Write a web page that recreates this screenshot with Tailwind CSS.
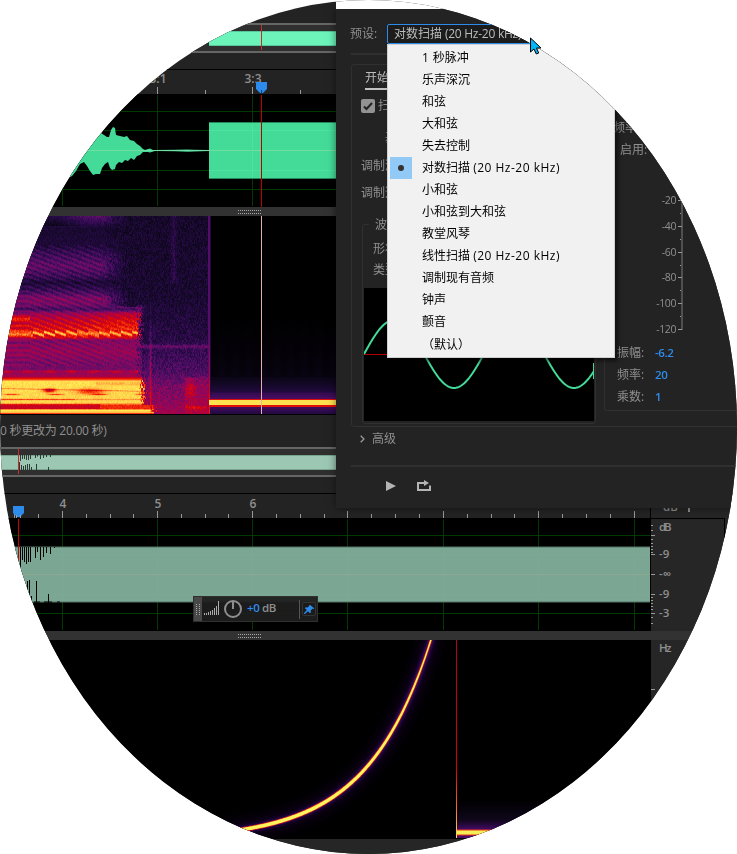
<!DOCTYPE html>
<html lang="zh-CN">
<head>
<meta charset="utf-8">
<title>音频编辑器</title>
<script src="https://cdn.jsdelivr.net/npm/@tailwindcss/browser@4"></script>
</head>
<body class="bg-white">
<div class="relative h-[854px] w-[737px] overflow-hidden font-['Open_Sans','Noto_Sans_CJK_SC',sans-serif] text-[12px] text-[#8f8f8f]">
<main class="relative h-[854px] w-[737px] overflow-hidden bg-[#232323] [clip-path:ellipse(368.5px_427px_at_368.5px_427px)]">

  <!-- upper editor -->
  <section class="flex h-[415px] w-[336px] flex-col">
    <div class="h-[23px]"></div>
    <div class="relative flex h-[30px] flex-col justify-center border-y-2 border-[#666] bg-[#2f2f2f]">
      <div class="ml-[209px] h-[15px] border-y border-[#55c79a] bg-[#6cf4bb]"></div>
      <div class="absolute top-0 left-[261px] h-[25px] w-px bg-[#d02828]"></div>
    </div>
    <div class="h-[17px] border-b border-black"></div>
    <svg class="block h-6 w-[336px]" viewBox="0 70 336 24">
      <g fill="#8f8f8f" font-family="Open Sans, sans-serif" font-size="12" font-weight="600" text-anchor="middle"><text x="158" y="83">3:1</text><text x="253" y="83">3:3</text></g>
      <path d="M157.500 87v7M252.500 87v7M205.500 90v4M300.500 90v4" stroke="#999"/>
      <path d="M256 82h11v7l-4 4h-3l-4-4z" fill="#2d8ceb"/><path d="M261.500 90v4" stroke="#163d66"/>
    </svg>
    <svg class="block h-[113px] w-[336px] bg-black" viewBox="0 94 336 113">
      <path d="M0 111.500H336M0 130.500H336M0 170.500H336M0 189.500H336M62.500 95V206M157.500 95V206M252.500 95V206" stroke="#003a00"/>
      <path fill="#44db99" d="M60 150 L72 145 80 142 88 139 95 136 101 133 104 135 107 137 109 137 111 130 113 127 115 128 116 135 120 136 124 137 127 136 130 140 134 141 137 144 140 146 143 149 145 150 148 149 150 148.500 153 150 155 150 175 149.700 187 149.500 194 149.700 209 150 209 151 194 151.400 188 151.700 175 151.300 155 151 150 152.500 148 152 143 152 140 155 137 156 134 160 131 158 128 161 125 160 122 163 119 162 116 165 115 169 112 170 110 168 108 162 105 164 102 168 100 174 96 174 93 175 90 171 87 166 84 162 80 164 76 171 72 176 60 182z"/>
      <rect x="209" y="122" width="127" height="57" fill="#27875d"/><rect x="209" y="123" width="127" height="55" fill="#44db99"/>
      <path d="M60 150.500H336" stroke="#8ce0a6" stroke-opacity=".65"/>
      <path d="M252.500 123V178M209 130.500H336M209 170.500H336" stroke="#4ce2a1"/>
      <path d="M261.500 95V207" stroke="#bd0000"/>
    </svg>
    <div class="flex h-[9px] bg-[#323232] pt-[3px] pl-[238px]">
      <svg class="block" width="24" height="4" viewBox="0 0 24 4"><path d="M0 .5h24M0 3.500h24" stroke="#aaa" stroke-dasharray="1 1"/></svg>
    </div>
    <div class="relative h-[199px] border-b border-black bg-black">
      <canvas id="spectrum" class="block" width="336" height="198"></canvas>
    </div>
  </section>

  <!-- lower editor -->
  <section class="flex w-[737px] flex-col">
    <div class="flex h-8 items-center"><span class="w-[106px] text-[12px] tracking-[-0.25px] whitespace-nowrap">0 秒更改为 20.00 秒)</span></div>
    <svg class="block h-[30px] w-[336px]" viewBox="0 447 336 30">
      <path fill="#2f2f2f" d="M0 447h336v30H0z"/><path fill="#666" d="M0 447h336v2H0zM0 475h336v2H0z"/>
      <path fill="#78a490" d="M0 455h336v15H0z"/><path fill="#9cc7b3" d="M0 456h336v13H0z"/>
      <path d="M20.500 455v6M22.500 455v4M24.500 455v4M26.500 455v5M28.500 455v5M30.500 455v4M35.500 455v3M37.500 455v1.500M40.500 455v4M43.500 455v3M46.500 455v2M50.500 455v2M19.500 462v8M21.500 465v5M23.500 466v4M25.500 465v5M27.500 464v6M29.500 464v6M31.500 467v3M36.500 464v6M48.500 467v3" stroke="#2b3b33"/>
      <path d="M18.500 449v25" stroke="#d02828"/>
    </svg>
    <div class="h-[17px] border-b border-black"></div>
    <div class="flex h-[137px]">
      <div class="w-[650px]">
        <svg class="block" width="650" height="137" viewBox="0 494 650 137">
          <g fill="#8f8f8f" font-family="Open Sans, sans-serif" font-size="12" font-weight="600" text-anchor="middle"><text x="63" y="508">4</text><text x="158" y="508">5</text><text x="253" y="508">6</text></g>
          <path d="M62.500 511v7M157.500 511v7M252.500 511v7M347.500 511v7M443.500 511v7M538.500 511v7M634.500 511v7M14.500 514v4M38.500 514v4M86.500 514v4M110.500 514v4M133.500 514v4M181.500 514v4M205.500 514v4M228.500 514v4M276.500 514v4M300.500 514v4M324.500 514v4M371.500 514v4M395.500 514v4M419.500 514v4M467.500 514v4M491.500 514v4M514.500 514v4M562.500 514v4M586.500 514v4M610.500 514v4" stroke="#999"/>
          <path d="M13 506h11v7l-4 4h-3l-4-4z" fill="#2d8ceb"/><path d="M16.500 515v3M20.500 515v3" stroke="#9aa0a6"/>
          <path d="M0 518h650v113H0z"/>
          <path d="M0 535.500H650M0 613.500H650M62.500 519V630M157.500 519V630M252.500 519V630M347.500 519V630M443.500 519V630M538.500 519V630M634.500 519V630" stroke="#003a00"/>
          <path fill="#527264" d="M0 546.500h650v56H0z"/><path fill="#7aa693" d="M0 547.500h650v54H0z"/>
          <path d="M62.500 548v53M157.500 548v53M252.500 548v53M347.500 548v53M443.500 548v53M538.500 548v53M634.500 548v53M0 554.500H650M0 594.500H650" stroke="#7ca996"/>
          <path d="M0 574.500H650" stroke="#91a890"/>
          <path d="M20.500 547v20M22.500 547v13M24.500 547v15M26.500 547v17M28.500 547v15M30.500 547v15M35.500 547v11M37.500 547v5M40.500 547v13M43.500 547v10M46.500 547v6M50.500 547v7M54.500 547v1M27.500 581v22M29.500 580v23M31.500 596v7M36.500 581v22M48.500 594v9M34 602h6M44 602h8M57 602h3"  stroke="#000"/>
          <path d="M18.500 519v112" stroke="#d00000"/>
        </svg>
      </div>
      <svg class="block" width="87" height="137" viewBox="650 494 87 137">
        <path fill="#262626" d="M651 494h86v137h-86z"/>
        <path d="M650.500 494v137M650 518.500h75M724.500 518v20" stroke="#000"/>
        <g fill="#8f8f8f" font-family="Open Sans, sans-serif" font-size="11.500" font-weight="600"><text x="663" y="511">dB</text><path d="M688 508h2v4h-2z"/><text x="659" y="531" textLength="12.500">dB</text><text x="659" y="558">-9</text><text x="659" y="578">-∞</text><text x="659" y="598">-9</text><text x="659" y="617">-3</text></g>
        <path d="M651 535.500h4M651 554.500h4M651 574.500h4M651 594.500h4M651 613.500h4M651 525.500h2M651 530.500h2M651 539.500h2M651 543.500h2M651 546.500h2M651 549.500h2M651 552.500h2M651 597.500h2M651 600.500h2M651 603.500h2M651 606.500h2M651 609.500h2M651 617.500h2M651 623.500h2" stroke="#999"/>
      </svg>
    </div>
    <div class="flex h-[9px] bg-[#323232] pt-[3px] pl-[238px]">
      <svg class="block" width="24" height="4" viewBox="0 0 24 4"><path d="M0 .5h24M0 3.500h24" stroke="#aaa" stroke-dasharray="1 1"/></svg>
    </div>
    <svg class="block h-[199px] w-[737px]" viewBox="0 640 737 199">
      <defs>
        <filter id="glow" x="-20%" y="-20%" width="140%" height="140%"><feGaussianBlur stdDeviation="8"/></filter>
        <filter id="halo"><feGaussianBlur stdDeviation="2"/></filter>
        <linearGradient id="edge" x1="0" y1="640" x2="0" y2="838" gradientUnits="userSpaceOnUse"><stop stop-color="#b5001c"/><stop offset=".65" stop-color="#d80000"/><stop offset=".85" stop-color="#ff6a20"/><stop offset="1" stop-color="#ffe45a"/></linearGradient>
        <linearGradient id="floor" x1="0" y1="0" x2="0" y2="1"><stop stop-color="#180b2b" stop-opacity="0"/><stop offset=".65" stop-color="#180b2b" stop-opacity=".6"/><stop offset="1" stop-color="#4a0b6e"/></linearGradient>
      </defs>
      <path d="M0 640h651v199H0z"/>
      <path fill="#262626" d="M651 640h86v199h-86z"/>
      <text x="659" y="652" textLength="12.500" fill="#8f8f8f" font-family="Open Sans, sans-serif" font-size="11.500" font-weight="600">Hz</text><path d="M651 689.500h4" stroke="#999"/>
      <g fill="none">
        <path class="sweep" stroke="#250845" stroke-width="12" filter="url(#glow)" opacity=".6"/>
        <path class="sweep" stroke="#3b0d6a" stroke-width="6" filter="url(#halo)"/>
      </g>
      <path id="rim" fill="#d8141c"/><path id="core" fill="#fff45c"/>
      <path fill="url(#floor)" d="M457 800h194v30H457z"/><path fill="#4a0b6e" d="M457 835h194v3H457z"/>
      <path fill="#f33010" d="M457 829.500h194v6H457z"/><path fill="#f2ef58" d="M457 830.500h194v4H457z"/>
      <path d="M456 640h1v198h-1z" fill="url(#edge)"/>
    </svg>
    <div class="h-[15px] bg-[#262626]"></div>
  </section>

  <!-- floating gain control -->
  <div class="absolute top-[596px] left-[193px] flex h-[26px] w-[125px] items-center border border-[#303030] bg-[#1e1e1e]/95">
    <div class="flex h-full w-[8px] items-center justify-center bg-[#484848]"><svg width="4" height="11" viewBox="0 0 4 11"><path d="M.5 0v11M3.500 0v11" stroke="#aaa" stroke-dasharray="1 1"/></svg></div>
    <svg class="mt-[-2px] ml-[2px]" width="15" height="14" viewBox="0 0 15 14"><path d="M.5 12v2M2.500 12v2M4.500 11v3M6.500 10v4M8.500 9v5M10.500 7v7M12.500 5v9M14.500 0v14" stroke="#aaa"/></svg>
    <svg class="ml-[4px]" width="20" height="20" viewBox="0 0 20 20" fill="none" stroke="#8e8e8e" stroke-width="2"><circle cx="10" cy="10" r="8"/><path d="M10 2v8"/></svg>
    <div class="ml-[4px] w-[52px] pb-[2px] text-[11.500px] leading-[22px] font-semibold tracking-[-0.4px]"><span class="text-[#2d8ceb]">+0</span> dB</div>
    <div class="h-[19px] w-px bg-[#555]"></div>
    <svg class="ml-[2px] rounded-[2px] border border-[#333] bg-[#1b1b1b]" width="14" height="14" viewBox="0 0 14 14"><path d="M8 2l5 4-1 1-1-.3-2 2 .2 2.300-1 1-2.500-2.500L2 13l-1-1 3.500-3.700L2.200 6l1-1 2.300.2 2-2L7 2.700z" fill="#2d8ceb"/></svg>
  </div>

  <!-- tone generator dialog, with the blank desktop strip above its title edge -->
  <section class="absolute top-[9px] left-[336px] h-[499px] w-[420px] bg-[#232323] shadow-[0_0_8px_rgba(0,0,0,0.5)]">
    <div class="absolute -top-[9px] left-0 h-[9px] w-full bg-white"></div>
    <header class="ml-[15px] flex h-[46px] border-b-2 border-[#303030] pt-[15px]">
      <label class="-ml-px w-[37px] leading-[19px]">预设:</label>
      <div class="h-[20px] w-[220px] rounded-[2px] border border-[#2d8ceb] bg-[#1c1c1c] pl-[6px] text-[12px] leading-[18px] tracking-[-0.25px] whitespace-nowrap text-[#bcbcbc]"><span class="tracking-normal">对数扫描</span> (20 Hz-20 kHz)</div>
    </header>
    <div class="mt-[9px] ml-[15px] flex h-[363px] rounded-[3px] border border-[#303030]">
      <div class="w-[252px] shrink-0">
        <div class="ml-[13px] flex h-[25px] w-8 items-end border-b-2 border-[#c0c0c0] leading-[21px] whitespace-nowrap text-[#bdbdbd]">开始</div>
        <div class="mt-[8px] ml-[9px] flex h-[15px] items-center gap-[3px] leading-[15px]"><svg width="14" height="14" viewBox="0 0 14 14"><rect width="14" height="14" rx="2" fill="#929292"/><path d="M3 7.500l2.500 2.500L11 4" fill="none" stroke="#232323" stroke-width="2"/></svg>扫描</div>
        <div class="mt-[15px] ml-[33px] leading-[20px]">基频:</div>
        <div class="mt-[8px] ml-[9px] leading-[20px]">调制深度:</div>
        <div class="mt-[7px] ml-[9px] leading-[20px]">调制速率:</div>
        <div class="mt-[21px] ml-[10px] h-[200px] w-[234px] rounded-[3px] border border-[#303030] leading-[20px]">
          <div class="-mt-[10px] ml-[6px] w-[34px] bg-[#232323] pl-[6px] whitespace-nowrap">波形</div>
          <div class="mt-[4px] ml-[10px]">形状:</div>
          <div class="mt-[1px] ml-[10px]">类型:</div>
          <svg class="mt-[8px] ml-px block bg-black" width="230" height="133" viewBox="0 0 230 133"><path d="M0 66.500h60" stroke="#b00000"/><path id="tone" fill="none" stroke="#44db99" stroke-width="2"/><path d="M229.500 75v16" stroke="#44db99"/></svg>
        </div>
      </div>
      <div class="w-[160px] shrink-0">
        <div class="mt-[53px] ml-[9px] leading-[20px]">频率分量</div>
        <div class="mt-[2px] ml-[16px] leading-[20px]">启用:</div>
        <svg class="mt-[32px] ml-[48px] block" width="48" height="146" viewBox="652 192 48 146">
          <g fill="#8f8f8f" font-family="Open Sans, sans-serif" font-size="10.500" text-anchor="end" font-weight="500" letter-spacing="-.4"><text x="676" y="204">-20</text><text x="676" y="230">-40</text><text x="676" y="256">-60</text><text x="676" y="281">-80</text><text x="676" y="307">-100</text><text x="676" y="333">-120</text></g>
          <path d="M682 200v130" stroke="#505050" stroke-width="2"/><path d="M678 200.500h4M678 226.500h4M678 252.500h4M678 277.500h4M678 303.500h4M678 329.500h4M680 213.500h1M680 239.500h1M680 265.500h1M680 290.500h1M680 316.500h1" stroke="#999"/>
        </svg>
        <div class="grid h-[73px] grid-cols-[38px_60px] grid-rows-[22px_22px_22px] rounded-bl-[3px] border-b border-l border-[#303030] pt-[5px] pl-[12px] leading-[20px]">
          <span>振幅:</span><b class="text-[11.500px] font-semibold tracking-[-0.4px] text-[#2d8ceb]">-6.2</b>
          <span>频率:</span><b class="text-[11.500px] font-semibold tracking-[-0.4px] text-[#2d8ceb]">20</b>
          <span>乘数:</span><b class="text-[11.500px] font-semibold text-[#2d8ceb]">1</b>
        </div>
      </div>
    </div>
    <div class="ml-[24px] flex h-[24px] items-center gap-[7px]"><svg width="5" height="8" viewBox="0 0 5 8"><path d="M.7.7L4 4 .7 7.300" fill="none" stroke="#999" stroke-width="1.300"/></svg><span>高级</span></div>
    <footer class="mt-[14px] ml-[15px] flex items-start gap-[21px] border-t-2 border-[#303030] pt-[13px] pl-[35px]">
      <svg class="mt-px" width="10" height="10" viewBox="0 0 10 10"><path d="M0 0l10 5-10 5z" fill="#b4b4b4"/></svg>
      <svg width="14" height="12" viewBox="0 0 14 12"><path d="M5 3H1v7h12V5.500" fill="none" stroke="#b4b4b4" stroke-width="2"/><path d="M5 2h2V0l5 3-5 3V4H5z" fill="#b4b4b4"/></svg>
    </footer>
  </section>

  <!-- preset menu -->
  <ul class="absolute top-[44px] left-[387px] h-[314px] w-[228px] border border-[#d0d0d0] bg-[#f1f1f1] py-[2px] text-[12px] leading-[22px] text-black shadow-[3px_3px_4px_rgba(0,0,0,0.5)] *:h-[22px] *:pl-[34px] *:whitespace-nowrap">
    <li><span class="tracking-[0.4px]">1 </span>秒脉冲</li><li>乐声深沉</li><li>和弦</li><li>大和弦</li><li>失去控制</li>
    <li class="relative">对数扫描 <span class="tracking-[0.5px]">(20 Hz-20 kHz)</span><i class="absolute top-0 left-[2px] flex h-[22px] w-[22px] items-center justify-center bg-[#91c9f7]"><svg width="6" height="6"><circle cx="3" cy="3" r="3" fill="#333"/></svg></i></li>
    <li>小和弦</li><li>小和弦到大和弦</li><li>教堂风琴</li><li>线性扫描 <span class="tracking-[0.5px]">(20 Hz-20 kHz)</span></li><li>调制现有音频</li><li>钟声</li><li>颤音</li><li class="pt-px">（默认）</li>
  </ul>
</main>
<svg class="absolute top-[37px] left-[530px]" width="12" height="18" viewBox="0 0 12 18"><path d="M.5 1v14l3.500-3 2.300 5 2.400-1-2.200-5H11z" fill="#00b7f5" stroke="#000"/></svg>
</div>

<script>
const clamp = v => Math.max(0, Math.min(1, v));
const ramp = [[0,0,0,0],[.14,18,8,36],[.25,40,10,72],[.36,84,14,104],[.47,140,8,96],[.57,180,0,60],[.67,222,8,4],[.78,255,80,20],[.88,255,175,65],[1,255,250,88]];
function colour(v) {
  v = clamp(v);
  let i = 1;
  while (i < ramp.length - 1 && ramp[i][0] < v) i++;
  const a = ramp[i - 1], b = ramp[i], t = (v - a[0]) / (b[0] - a[0]);
  return [1, 2, 3].map(k => a[k] + (b[k] - a[k]) * t);
}
let seed = 77;
const rnd = () => (seed = (seed * 16807) % 2147483647) / 2147483647;
const canvas = document.getElementById('spectrum'), ctx = canvas.getContext('2d');
const img = ctx.createImageData(336, 198);
const g = (y, c, w) => Math.exp(-(((y - c) / w) ** 2));
const sustained = [[0,.36],[6,.27],[12,.18],[28,.2],[36,.29],[50,.38],[60,.3],[66,.2],[74,.3],[82,.44],[88,.42],[93,.32],[97,.5],[104,.6],[112,.66],[121,.64],[124,.44],[136,.49],[145,.44],[153,.42],[160,.54],[163,.76],[165,.96],[186,.94],[189,.72],[192,.72],[194,.97],[196,.9],[198,.6]];
const tail = [[0,.16],[80,.18],[125,.24],[135,.28],[155,.34],[170,.43],[185,.47],[198,.52]];
const lookup = (t, y) => { for (let i = 1; i < t.length; i++) if (y <= t[i][0]) { const a = t[i-1], b = t[i]; return a[1] + (b[1]-a[1]) * (y-a[0]) / (b[0]-a[0]); } return t[t.length-1][1]; };
const noise = [];
for (let x = 0; x < 336; x++) { noise[x] = []; let n = 0; for (let y = 0; y < 198; y++) { if (y % 2 === 0 || rnd() < .25) n = rnd() - .5; noise[x][y] = n; } }
for (let y = 0; y < 198; y++) for (let x = 0; x < 336; x++) {
  let v;
  const n = noise[x][y];
  if (x < 209) {
    const drift = x < 28 ? 0 : (x - 28) * .38;
    const stripe = Math.sin((y - drift) * 1.28);
    let s = lookup(sustained, y);
    if (y < 10) s -= .12 * clamp((85 - x) / 30);
    if (y > 28 && y < 150) s += stripe * (y > 95 && y < 123 ? .06 : .05) * (x > 100 ? .5 : 1);
    if (y < 160) s += n * .09;
    if (y > 95 && y < 114) s += .06 * clamp((x - 80) / 40);
    if (x < 30) s += .2 * g(y, 102, 1.5);
    s += g(y, 117 + (x > 30 ? ((x % 11) - 5) * .3 : 0), 2) * .22;
    s += g(y, 155, 1.5) * (.12 + .06 * Math.sin(x / 3.5));
    if (y > 164 && y < 194) {
      s += n * .05;
      s -= g(y, 172 + x * .02, .7) * .11 + g(y, 183, .8) * .18 * (x < 75 ? 1 : .5) + g(y, 178, .8) * .2 * clamp(Math.sin(x / 7));
      s -= .35 * g(y, 174, 2) * g(x, 49, 6) + .22 * g(y, 175, 3) * g(x, 90, 14);
      s -= .14 * g(y, 167, 2) * (x > 95 ? 1 : 0) * (.5 + n);
    }
    if (x < 100 && y > 187 && y < 193) s -= .1;
    let t = lookup(tail, y) + n * .14 + .13 * g(y, 130, 2);
    if (y > 160) t += .14 * g(x, 190, 5) * g(y, 172, 10) + .12 * g(y, 191, 2) * g(x, 196, 12) + .05 * clamp((x - 184) * 9);
    if (y > 80) t += .2 * g(x, 150, 1) * clamp((y - 80) / 70);
    if (y < 68) t += .08 * g(x, 173, 3);
    const end = y > 188 ? 156 : y > 160 ? 146 : y > 90 ? 142 : 128;
    const soft = y < 90 ? 26 : 6, m = clamp((end + n * 5 - x) / soft);
    v = t + (s - t) * m;
    if (y > 88 && y < 100) v += .12 * g(x, 140, 4);
    if (x === 208) v = Math.max(v, .36);
  } else {
    v = y < 90 ? 0 : .1 * Math.pow((y - 90) / 85, 1.5) * (.8 + .15 * Math.cos(x / 2.2));
    if (y > 160) v = .08 + .2 * ((y - 160) / 23);
    if (y > 175) v = .24 + (y - 175) * .012 + (y % 2) * .025;
    if (y === 183 || y === 189 || y === 190) v = .68;
    if (y > 183 && y < 189) v = .96;
    if (y > 190) v = .32 - (y - 190) * .012;
    if (x < 211) v = Math.max(v, x === 209 ? .36 + .34 * clamp((y - 120) / 65) : .2);
  }
  const c = colour(v), p = (y * 336 + x) * 4;
  img.data[p] = c[0]; img.data[p+1] = c[1]; img.data[p+2] = c[2]; img.data[p+3] = 255;
}
ctx.putImageData(img, 0, 0);
ctx.fillStyle = '#e5afaa';
ctx.fillRect(261, 0, 1, 198);

// logarithmic sweep on a linear frequency axis
const curve = [];
for (let x = 215; x <= 432; x++) curve.push([x, 840 - Math.exp(5.308 - .0157 * (431.5 - x))]);
const line = p => 'M' + p.map(q => q[0].toFixed(2) + ' ' + q[1].toFixed(2)).join('L');
document.querySelectorAll('.sweep').forEach(e => e.setAttribute('d', line(curve)));
function ribbon(extra) {
  const up = [], down = [];
  curve.forEach((p, i) => {
    const a = curve[Math.max(0, i-1)], b = curve[Math.min(curve.length-1, i+1)];
    const dx = b[0]-a[0], dy = b[1]-a[1], l = Math.hypot(dx, dy) || 1;
    const w = .7 + 1.1 * clamp((p[1] - 660) / 150) + extra;
    up.push([p[0] - dy/l*w, p[1] + dx/l*w]);
    down.unshift([p[0] + dy/l*w, p[1] - dx/l*w]);
  });
  return line(up.concat(down)) + 'Z';
}
document.getElementById('rim').setAttribute('d', ribbon(.7));
document.getElementById('core').setAttribute('d', ribbon(0));
const wave = [];
for (let x = 0; x <= 230; x++) wave.push([x, 66 - 34 * Math.sin(x * Math.PI / 60)]);
document.getElementById('tone').setAttribute('d', line(wave));
</script>
</body>
</html>
